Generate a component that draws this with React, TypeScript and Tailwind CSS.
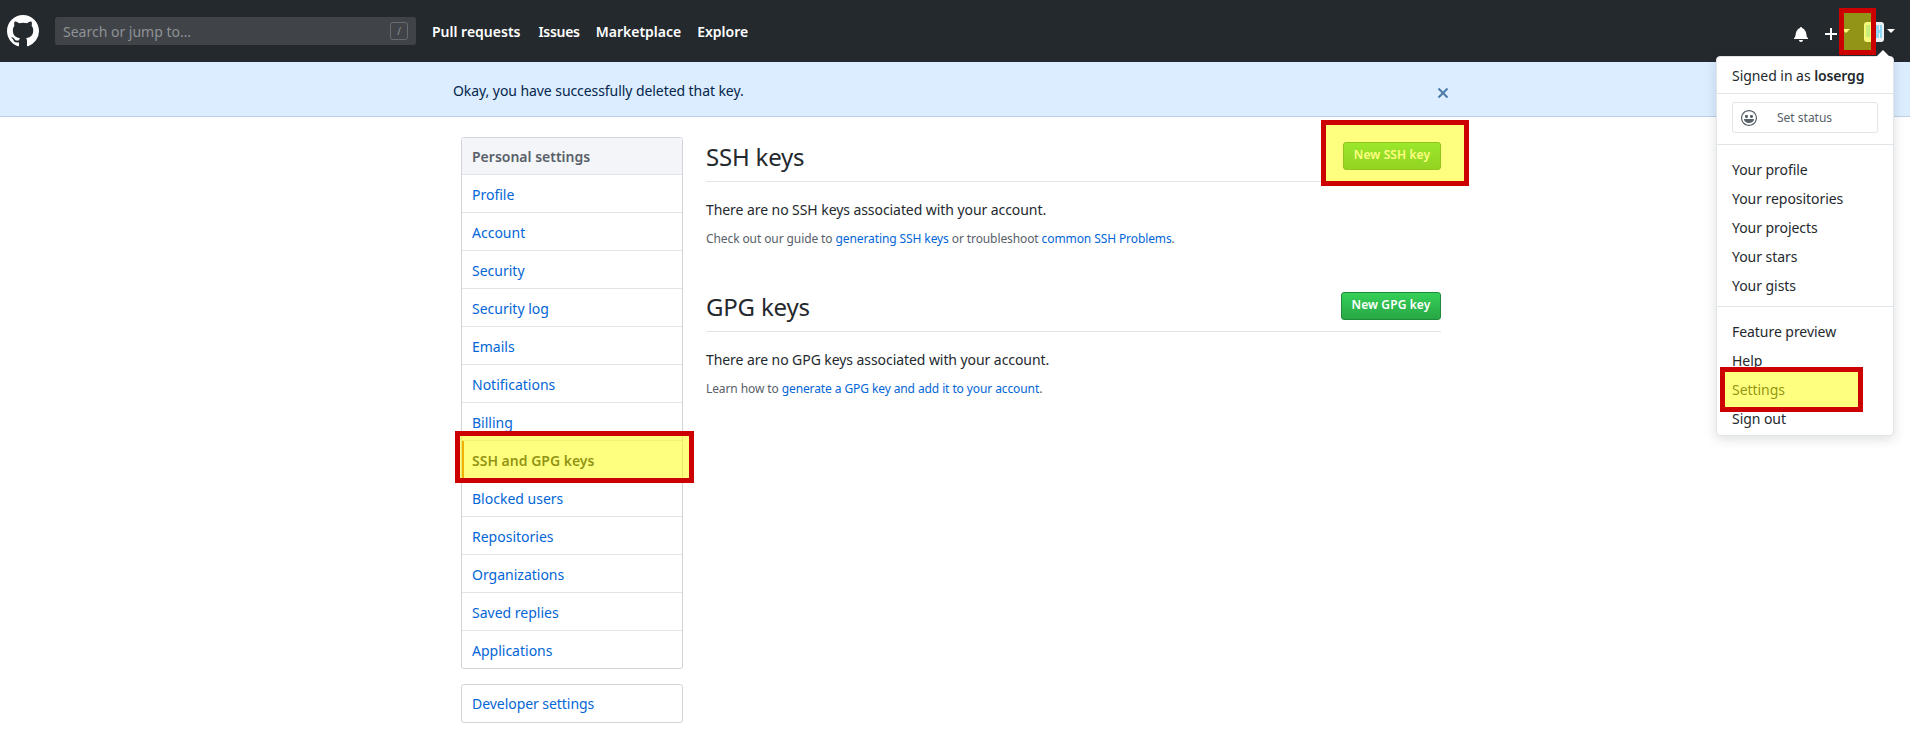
const font = "font-['Noto_Sans',sans-serif]";

const MarkGithub = () => (
  <svg viewBox="0 0 16 16" className="w-8 h-8 fill-white">
    <path d="M8 0C3.58 0 0 3.58 0 8c0 3.54 2.29 6.53 5.47 7.59.4.07.55-.17.55-.38 0-.19-.01-.82-.01-1.49-2.01.37-2.53-.49-2.69-.94-.09-.23-.48-.94-.82-1.13-.28-.15-.68-.52-.01-.53.63-.01 1.08.58 1.23.82.72 1.21 1.87.87 2.33.66.07-.52.28-.87.51-1.07-1.78-.2-3.64-.89-3.64-3.95 0-.87.31-1.59.82-2.15-.08-.2-.36-1.02.08-2.12 0 0 .67-.21 2.2.82.64-.18 1.32-.27 2-.27.68 0 1.36.09 2 .27 1.53-1.04 2.2-.82 2.2-.82.44 1.1.16 1.92.08 2.12.51.56.82 1.27.82 2.15 0 3.07-1.87 3.75-3.65 3.95.29.25.54.73.54 1.48 0 1.07-.01 1.93-.01 2.2 0 .21.15.46.55.38A8.013 8.013 0 0 0 16 8c0-4.42-3.58-8-8-8z" />
  </svg>
);

const Caret = () => (
  <span className="w-0 h-0 border-x-[4px] border-x-transparent border-t-[4px] border-t-white" />
);

// yellow marker boxes drawn over the screenshot
const Marker = ({ className }: { className: string }) => (
  <div className={`absolute border-[5px] border-[#cc0000] bg-[rgba(255,255,0,0.5)] ${className}`} />
);

const sideItems = [
  "Profile",
  "Account",
  "Security",
  "Security log",
  "Emails",
  "Notifications",
  "Billing",
  "SSH and GPG keys",
  "Blocked users",
  "Repositories",
  "Organizations",
  "Saved replies",
  "Applications",
];

const Header = () => (
  <header className="h-[62px] bg-[#24292e] flex items-center pl-[7px] pr-[15px] text-white">
    <MarkGithub />
    <div className="ml-4 w-[361px] h-7 rounded-[3px] bg-[#404448] flex items-center justify-between pl-2 pr-2">
      <span className="pt-[2px] text-sm text-[#8f9296]">Search or jump to…</span>
      <span className="w-[18px] h-[18px] border border-[#686c70] rounded-[3px] text-[10px] leading-none text-[#8f9296] flex items-center justify-center">
        /
      </span>
    </div>
    <nav className="ml-4 pt-[2px] flex items-center text-sm font-semibold">
      <span>Pull requests</span>
      <span className="ml-[18px] tracking-[-0.3px]">Issues</span>
      <span className="ml-[16px]">Marketplace</span>
      <span className="ml-[16px]">Explore</span>
    </nav>
    <div className="ml-auto flex items-center">
      <svg viewBox="0 0 14 16" className="mt-[6px] w-[14px] h-4 fill-white">
        <path d="M14 12v1H0v-1l.73-.58c.77-.77.81-2.55 1.19-4.42C2.69 3.23 6 2 6 2c0-.55.45-1 1-1s1 .45 1 1c0 0 3.39 1.23 4.16 5 .38 1.88.42 3.66 1.19 4.42l.66.58H14zm-7 4c1.11 0 2-.89 2-2H5c0 1.11.89 2 2 2z" />
      </svg>
      <svg viewBox="0 0 12 16" className="mt-[6px] ml-[17px] w-3 h-4 fill-white">
        <path d="M12 9H7v5H5V9H0V7h5V2h2v5h5v2z" />
      </svg>
      <span className="ml-[5px] flex"><Caret /></span>
      <svg viewBox="0 0 20 20" className="mt-[2px] ml-[14px] w-5 h-5 rounded-[3px]" shapeRendering="crispEdges">
        <rect width="20" height="20" fill="#f0f0f0" />
        <rect x="2" y="3" width="4" height="12" fill="#8fd8f5" />
        <rect x="12" y="3" width="3" height="13" fill="#8fd8f5" />
        <rect x="16" y="3" width="2" height="13" fill="#8fd8f5" />
        <rect x="12" y="8" width="6" height="3" fill="#8fd8f5" />
      </svg>
      <span className="ml-[3px] flex"><Caret /></span>
    </div>
  </header>
);

const Banner = () => (
  <div className="h-[55px] bg-[#dbedff] border-b border-[#bdd0e5] flex pr-2">
    <div className="mx-auto w-[980px] pt-[3px] flex items-center justify-between text-sm text-[#05264c]">
      <span className="-ml-2 tracking-[-0.07px]">Okay, you have successfully deleted that key.</span>
      <svg viewBox="0 0 12 16" className="mt-[5px] w-3 h-4 fill-[#4f7ca8] mr-[-8px]">
        <path d="M7.48 8l3.75 3.75-1.48 1.48L6 9.48l-3.75 3.75-1.48-1.48L4.52 8 .77 4.25l1.48-1.48L6 6.52l3.75-3.75 1.48 1.48L7.48 8z" />
      </svg>
    </div>
  </div>
);

const Sidebar = () => (
  <aside className="w-[222px] shrink-0">
    <div className="border border-[#d1d5da] rounded-[3px] text-sm">
      <div className="h-[37px] px-[10px] pt-[2px] flex items-center bg-[#f3f5f8] border-b border-[#e1e4e8] font-semibold text-[#586069]">
        Personal settings
      </div>
      {sideItems.map((item, i) =>
        item === "SSH and GPG keys" ? (
          <div
            key={item}
            className="h-[38px] pl-2 pt-[2px] flex items-center border-b border-[#e1e4e8] border-l-2 border-l-[#e36209] font-semibold text-[#24292e]"
          >
            {item}
          </div>
        ) : (
          <div
            key={item}
            className={`px-[10px] pt-[2px] flex items-center text-[#0366d6] ${
              i < sideItems.length - 1 ? "h-[38px] border-b border-[#e1e4e8]" : "h-[37px]"
            }`}
          >
            {item}
          </div>
        )
      )}
    </div>
    <div className="mt-[15px] h-[39px] px-[10px] pt-px flex items-center border border-[#d1d5da] rounded-[3px] text-sm tracking-[-0.05px] text-[#0366d6]">
      Developer settings
    </div>
  </aside>
);

const KeySection = ({
  title,
  button,
  buttonWidth,
  children,
  note,
}: {
  title: string;
  button: string;
  buttonWidth: string;
  children: string;
  note: React.ReactNode;
}) => (
  <section>
    <div className="h-[44px] flex items-center justify-between border-b border-[#e1e4e8] pb-2">
      <h2 className="pt-[2px] text-2xl font-normal tracking-[-0.2px] text-[#24292e]">{title}</h2>
      <button className={`h-7 ${buttonWidth} pb-[2px] rounded-[3px] border border-[#1f8a3a] bg-gradient-to-b from-[#34d058] to-[#28a745] text-xs font-semibold tracking-[0.1px] text-white`}>
        {button}
      </button>
    </div>
    <p className="mt-[17px] text-sm leading-[21px] tracking-[-0.07px] text-[#24292e]">{children}</p>
    <p className="mt-[10px] text-xs leading-[18px] tracking-[-0.1px] text-[#586069]">{note}</p>
  </section>
);

const DropItem = ({ children }: { children: string }) => (
  <div className="h-[29px] pl-[15px] flex items-center text-sm tracking-[-0.05px] text-[#24292e]">{children}</div>
);

const Dropdown = () => (
  <div className="absolute left-[1716px] top-[56px] w-[178px] h-[380px] bg-white border border-[#e1e4e8] rounded-[4px] shadow-[0_3px_12px_rgba(27,31,35,0.15)]">
    <span className="absolute left-[159px] -top-[7px] w-0 h-0 border-x-[7px] border-x-transparent border-b-[7px] border-b-white" />
    <div className="h-9 pl-[15px] pt-px flex items-center text-sm tracking-[-0.05px] text-[#24292e]">
      Signed in as&nbsp;<span className="font-semibold tracking-[-0.15px]">losergg</span>
    </div>
    <div className="border-t border-[#e1e4e8] h-[51px] pt-2 px-[15px]">
      <div className="w-[146px] h-[31px] border border-[#e1e4e8] rounded-[3px] flex items-center pl-2 text-xs text-[#586069]">
        <svg viewBox="0 0 16 16" className="w-4 h-4 fill-[#586069]">
          <path d="M8 0C3.58 0 0 3.58 0 8s3.58 8 8 8 8-3.58 8-8-3.58-8-8-8zm4.81 12.81a6.72 6.72 0 0 1-2.17 1.45c-.83.36-1.72.53-2.64.53-.92 0-1.81-.17-2.64-.53-.81-.34-1.55-.83-2.17-1.45a6.773 6.773 0 0 1-1.45-2.17A6.59 6.59 0 0 1 1.21 8c0-.92.17-1.81.53-2.64.34-.81.83-1.55 1.45-2.17.62-.62 1.36-1.11 2.17-1.45A6.59 6.59 0 0 1 8 1.21c.92 0 1.81.17 2.64.53.81.34 1.55.83 2.17 1.45.62.62 1.11 1.36 1.45 2.17.36.83.53 1.72.53 2.64 0 .92-.17 1.81-.53 2.64-.34.81-.83 1.55-1.45 2.17zM4 6.8v-.59c0-.66.53-1.19 1.2-1.19h.59c.66 0 1.19.53 1.19 1.19v.59c0 .67-.53 1.2-1.19 1.2H5.2C4.53 8 4 7.47 4 6.8zm5 0v-.59c0-.66.53-1.19 1.2-1.19h.59c.66 0 1.19.53 1.19 1.19v.59c0 .67-.53 1.2-1.19 1.2h-.59C9.53 8 9 7.47 9 6.8zm4 3.2c-.72 1.88-2.91 3-5 3s-4.28-1.13-5-3c-.14-.39.23-1 .66-1h8.59c.41 0 .89.61.75 1z" />
        </svg>
        <span className="ml-5">Set status</span>
      </div>
    </div>
    <div className="border-t border-[#e1e4e8] pt-[10px] pb-[6px]">
      <DropItem>Your profile</DropItem>
      <DropItem>Your repositories</DropItem>
      <DropItem>Your projects</DropItem>
      <DropItem>Your stars</DropItem>
      <DropItem>Your gists</DropItem>
    </div>
    <div className="border-t border-[#e1e4e8] pt-[10px]">
      <DropItem>Feature preview</DropItem>
      <DropItem>Help</DropItem>
      <DropItem>Settings</DropItem>
      <DropItem>Sign out</DropItem>
    </div>
  </div>
);

const App = () => {
  return (
    <div className={`relative h-[748px] overflow-hidden bg-white ${font}`}>
      <Header />
      <Banner />
      <div className="pr-2 pt-[20px]">
        <div className="mx-auto w-[980px] flex gap-[23px]">
          <Sidebar />
          <main className="flex-1 space-y-[40px] pt-[1px]">
            <KeySection
              title="SSH keys"
              button="New SSH key"
              buttonWidth="w-[98px]"
              note={
                <>
                  Check out our guide to <span className="text-[#0366d6]">generating SSH keys</span> or troubleshoot{" "}
                  <span className="text-[#0366d6]">common SSH Problems</span>.
                </>
              }
            >
              There are no SSH keys associated with your account.
            </KeySection>
            <KeySection
              title="GPG keys"
              button="New GPG key"
              buttonWidth="w-[100px]"
              note={
                <>
                  Learn how to <span className="text-[#0366d6]">generate a GPG key and add it to your account</span>.
                </>
              }
            >
              There are no GPG keys associated with your account.
            </KeySection>
          </main>
        </div>
      </div>
      <Dropdown />
      <Marker className="left-[1839px] top-[8px] w-[37px] h-[47px]" />
      <Marker className="left-[1321px] top-[120px] w-[148px] h-[66px]" />
      <Marker className="left-[455px] top-[431px] w-[239px] h-[52px]" />
      <Marker className="left-[1720px] top-[367px] w-[143px] h-[45px]" />
    </div>
  );
};

export default App;
